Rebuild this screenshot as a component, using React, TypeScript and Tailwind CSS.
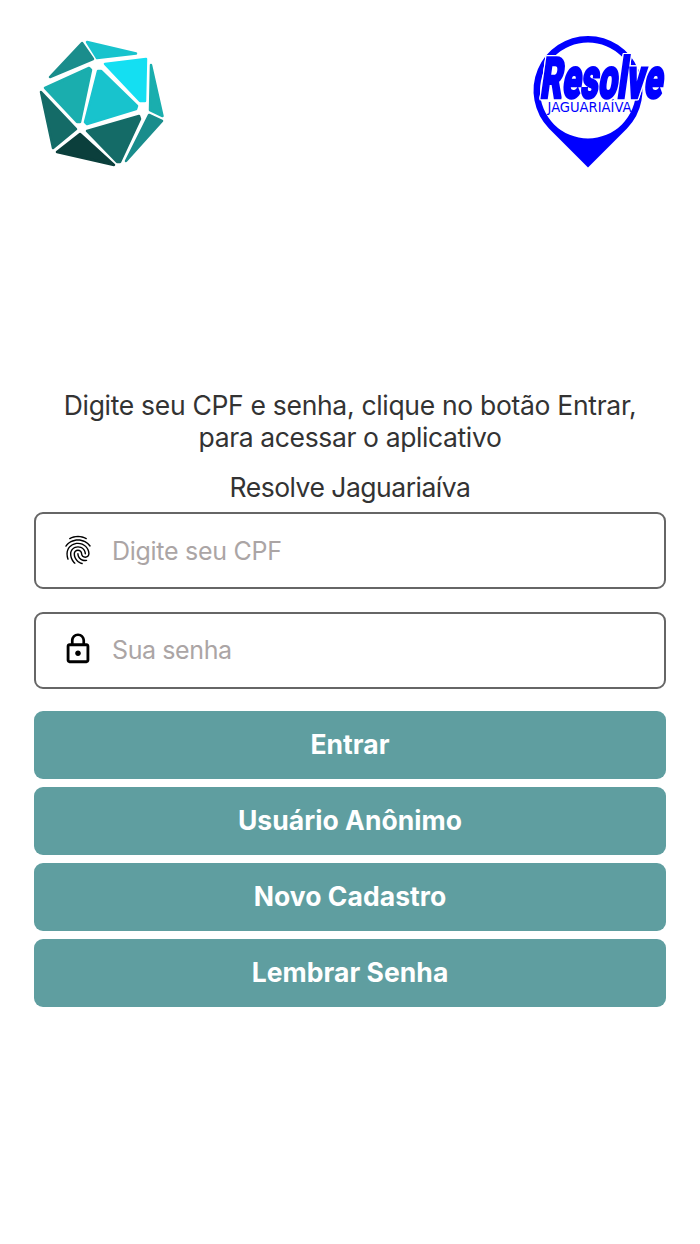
import { MdFingerprint, MdLockOutline } from "react-icons/md";

const actions = ["Entrar", "Usuário Anônimo", "Novo Cadastro", "Lembrar Senha"];

function PolyhedronLogo() {
    const facets = [
        { points: "52,13 63,29 20,47", color: "#1a8d8c" },
        { points: "57,12 106,23.5 67,28", color: "#18c3cd" },
        { points: "75,34 116,29 115,71 110,71", color: "#14dff2" },
        { points: "15,58 59,38 61,40 50,92 47,92", color: "#1aaeae" },
        { points: "68,41 71,41 107,76 106,79 57,94 55,92", color: "#18c3cd" },
        { points: "121,35 132.5,86 120,80", color: "#1aaeae" },
        { points: "11,62 46,99 23,118", color: "#146b67" },
        { points: "50,104 84,135 27,122", color: "#0b3f3c" },
        { points: "57,101 109,86 110,89 90,132 87,132", color: "#146b67" },
        { points: "119,85 132,91 96,131", color: "#1a8d8c" },
    ];

    return (
        <svg className="w-[145px] h-[145px]" viewBox="0 0 145 145">
            {facets.map((facet) => (
                <polygon key={facet.points} points={facet.points} fill={facet.color} stroke={facet.color} strokeWidth="2.5" strokeLinejoin="round" />
            ))}
        </svg>
    );
}

function ResolveLogo() {
    return (
        <svg className="w-[145px] h-[145px] overflow-visible" viewBox="0 0 145 145" fill="#0000ff">
            <path fillRule="evenodd" d="M63 6a54.5 54.5 0 0 1 39 92.5L63 137.5 24 98.5A54.5 54.5 0 0 1 63 6ZM63 12.5a48 48 0 1 0 0 96a48 48 0 0 0 0-96Z" />
            <g className="[filter:drop-shadow(1px_0_white)_drop-shadow(-1px_0_white)_drop-shadow(0_1px_white)_drop-shadow(0_-1px_white)]">
                <text
                    transform="translate(14.5 68.2) skewX(-8) scale(0.59 1)"
                    fontFamily="Roboto, sans-serif"
                    fontWeight="900"
                    fontSize="57"
                    textLength="207"
                    lengthAdjust="spacingAndGlyphs"
                    stroke="#0000ff"
                    strokeWidth="2.6"
                >
                    Resolve
                </text>
            </g>
            <text x="22.5" y="81.500" fontFamily="DejaVu Sans, sans-serif" fontSize="14" textLength="84" lengthAdjust="spacingAndGlyphs">
                JAGUARIAÍVA
            </text>
        </svg>
    );
}

export default function App() {
    return (
        <div className="min-h-[1244px] bg-white px-[34px] font-['Inter',sans-serif] text-[#333333]">
            <header className="flex justify-between -mx-1 pt-[30px]">
                <PolyhedronLogo />
                <ResolveLogo />
            </header>

            <main className="pt-[214px]">
                <p className="text-center text-[26.5px] tracking-[-0.31px] leading-8">
                    Digite seu CPF e senha, clique no botão Entrar,
                    <br />
                    <span className="tracking-[-0.38px]">para acessar o aplicativo</span>
                </p>
                <p className="mt-[18px] text-center text-[26.5px] tracking-[-0.5px] leading-8">Resolve Jaguariaíva</p>

                <form className="mt-[9px]">
                    <label className="flex h-[77px] items-center rounded-[9px] border-2 border-[#666666] pl-[25px]">
                        <MdFingerprint className="mb-0.5 h-[34px] w-[34px] text-black" />
                        <input className="mt-0.5 ml-[17px] flex-1 text-[25px] tracking-[-0.28px] outline-none placeholder:text-[#aba5a5]" placeholder="Digite seu CPF" />
                    </label>
                    <label className="mt-[23px] flex h-[77px] items-center rounded-[9px] border-2 border-[#666666] pl-[25px]">
                        <MdLockOutline className="mb-[3px] h-[34px] w-[34px] text-black" />
                        <input className="ml-[17px] flex-1 text-[25px] tracking-[-0.4px] outline-none placeholder:text-[#aba5a5]" type="password" placeholder="Sua senha" />
                    </label>

                    <div className="mt-[22px] flex flex-col gap-[8.5px]">
                        {actions.map((action) => (
                            <button key={action} type="button" className="h-[67.5px] rounded-[9px] bg-[#5f9ea0] text-[26.5px] font-bold tracking-[0.05px] text-white">
                                {action}
                            </button>
                        ))}
                    </div>
                </form>
            </main>
        </div>
    );
}
